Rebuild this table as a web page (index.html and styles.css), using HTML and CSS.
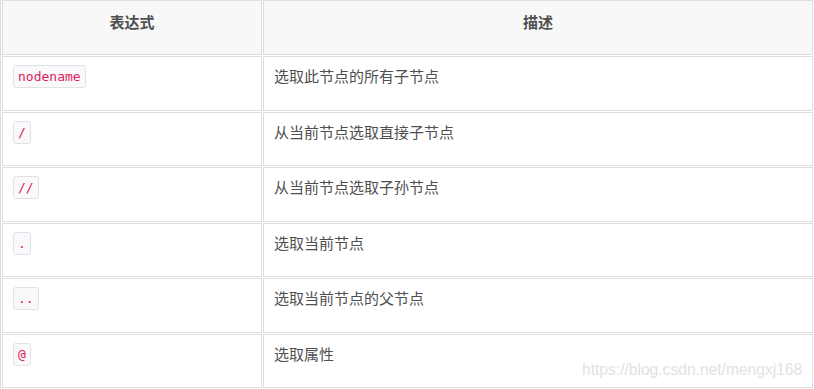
FILE: index.html
```html
<!DOCTYPE html>
<html lang="zh-CN">
<head>
<meta charset="utf-8">
<title>XPath 表达式</title>
<link rel="stylesheet" href="styles.css">
</head>
<body>
<div class="page">
  <table class="xtable">
    <colgroup>
      <col class="col-expr">
      <col class="col-desc">
    </colgroup>
    <thead>
      <tr>
        <th>表达式</th>
        <th>描述</th>
      </tr>
    </thead>
    <tbody>
      <tr>
        <td><code class="code">nodename</code></td>
        <td>选取此节点的所有子节点</td>
      </tr>
      <tr>
        <td><code class="code">/</code></td>
        <td>从当前节点选取直接子节点</td>
      </tr>
      <tr>
        <td><code class="code">//</code></td>
        <td>从当前节点选取子孙节点</td>
      </tr>
      <tr>
        <td><code class="code">.</code></td>
        <td>选取当前节点</td>
      </tr>
      <tr>
        <td><code class="code">..</code></td>
        <td>选取当前节点的父节点</td>
      </tr>
      <tr>
        <td><code class="code">@</code></td>
        <td>选取属性</td>
      </tr>
    </tbody>
  </table>
  <div class="watermark">https://blog.csdn.net/mengxj168</div>
</div>
</body>
</html>
```

FILE: styles.css
```css
html, body {
  margin: 0;
  padding: 0;
  background: #ffffff;
}

.page {
  position: relative;
  width: 814px;
  height: 389px;
  overflow: hidden;
  font-family: "Noto Sans CJK SC", "Microsoft YaHei", sans-serif;
  color: #4f4f4f;
}

.xtable {
  table-layout: fixed;
  width: 814px;
  border-collapse: separate;
  border-spacing: 1px;
  border-left: 1px solid #dddddd;
  margin: -1px 0 0 0;
}

.col-expr { width: 260px; }
.col-desc { width: 550px; }

.xtable th,
.xtable td {
  box-sizing: border-box;
  border: 1px solid #dddddd;
  padding: 8px 10px 0 10px;
  vertical-align: top;
  font-size: 15px;
  line-height: 22px;
  text-align: left;
}

.xtable th {
  height: 55px;
  padding-top: 10px;
  background: #f8f8f8;
  font-weight: bold;
  text-align: center;
  color: #4f4f4f;
}

.xtable tbody tr:nth-child(odd) td { height: 55px; }
.xtable tbody tr:nth-child(even) td { height: 54px; }

.code {
  display: inline-block;
  vertical-align: top;
  margin-top: 0;
  padding: 0 4px;
  border: 1px solid #e1e1e8;
  border-radius: 3px;
  background: #f9f9fb;
  color: #dd1d5a;
  font-family: "DejaVu Sans Mono", "Liberation Mono", monospace;
  font-size: 13px;
  line-height: 21px;
}

.watermark {
  position: absolute;
  left: 582px;
  top: 359px;
  font-family: "Liberation Sans", Arial, sans-serif;
  font-size: 15.6px;
  line-height: 22px;
  color: #e2e2e2;
  white-space: nowrap;
}
```
